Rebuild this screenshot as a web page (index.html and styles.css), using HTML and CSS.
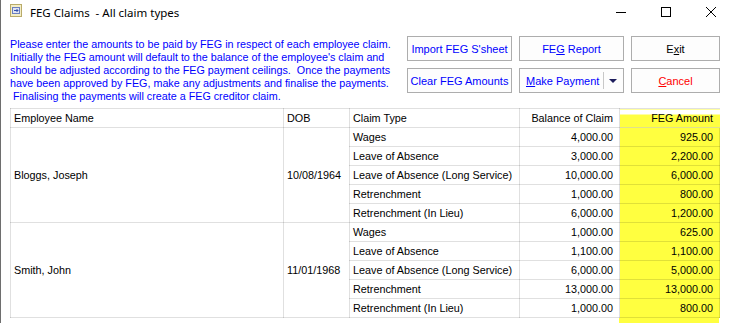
FILE: index.html
```html
<!DOCTYPE html>
<html>
<head>
<meta charset="utf-8">
<link rel="stylesheet" href="styles.css">
</head>
<body>
<div class="window">
  <div class="titlebar">
    <svg class="app-icon" width="12" height="13" viewBox="0 0 12 13">
      <rect x="0.5" y="0.5" width="11" height="12" fill="#f4eec6" stroke="#b9ab6a"/>
      <rect x="2.5" y="3.5" width="7" height="6" fill="#dfe3f2" stroke="#6b7fbf"/>
      <path d="M4 6.5h4M6.5 5l1.5 1.5L6.5 8" fill="none" stroke="#3050b0" stroke-width="1"/>
    </svg>
    <span class="title">FEG Claims  - All claim types</span>
    <div class="caption">
      <span class="cap"><svg width="10" height="10" viewBox="0 0 10 10"><path d="M0 5.5h10" stroke="#000" stroke-width="1"/></svg></span>
      <span class="cap"><svg width="10" height="10" viewBox="0 0 10 10"><rect x="0.5" y="0.5" width="9" height="9" fill="none" stroke="#000"/></svg></span>
      <span class="cap"><svg width="10" height="10" viewBox="0 0 10 10"><path d="M0 0L10 10M10 0L0 10" stroke="#000" stroke-width="1"/></svg></span>
    </div>
  </div>

  <div class="top">
    <p class="intro">Please enter the amounts to be paid by FEG in respect of each employee claim.<br>Initially the FEG amount will default to the balance of the employee's claim and<br>should be adjusted according to the FEG payment ceilings.&nbsp; Once the payments<br>have been approved by FEG, make any adjustments and finalise the payments.<br>&nbsp;Finalising the payments will create a FEG creditor claim.</p>
    <div class="actions">
      <button class="btn"><span>Import FEG S'sheet</span></button>
      <button class="btn"><span>FE<u>G</u> Report</span></button>
      <button class="btn btn-exit"><span>E<u>x</u>it</span></button>
      <button class="btn"><span>Clear FEG Amounts</span></button>
      <button class="btn btn-split"><span class="split-label"><u>M</u>ake Payment</span><span class="split-sep"></span><span class="split-arrow"></span></button>
      <button class="btn btn-cancel"><span><u>C</u>ancel</span></button>
    </div>
  </div>

  <table class="grid">
    <colgroup>
      <col class="c-name"><col class="c-dob"><col class="c-type"><col class="c-bal"><col class="c-feg">
    </colgroup>
    <thead>
      <tr>
        <th>Employee Name</th>
        <th>DOB</th>
        <th>Claim Type</th>
        <th class="num">Balance of Claim</th>
        <th class="num feg feg-head">FEG Amount</th>
      </tr>
    </thead>
    <tbody>
      <tr>
        <td rowspan="5">Bloggs, Joseph</td>
        <td rowspan="5">10/08/1964</td>
        <td>Wages</td><td class="num">4,000.00</td><td class="num feg">925.00</td>
      </tr>
      <tr><td>Leave of Absence</td><td class="num">3,000.00</td><td class="num feg">2,200.00</td></tr>
      <tr><td>Leave of Absence (Long Service)</td><td class="num">10,000.00</td><td class="num feg">6,000.00</td></tr>
      <tr><td>Retrenchment</td><td class="num">1,000.00</td><td class="num feg">800.00</td></tr>
      <tr><td>Retrenchment (In Lieu)</td><td class="num">6,000.00</td><td class="num feg">1,200.00</td></tr>
      <tr>
        <td rowspan="5">Smith, John</td>
        <td rowspan="5">11/01/1968</td>
        <td>Wages</td><td class="num">1,000.00</td><td class="num feg">625.00</td>
      </tr>
      <tr><td>Leave of Absence</td><td class="num">1,100.00</td><td class="num feg">1,100.00</td></tr>
      <tr><td>Leave of Absence (Long Service)</td><td class="num">6,000.00</td><td class="num feg">5,000.00</td></tr>
      <tr><td>Retrenchment</td><td class="num">13,000.00</td><td class="num feg">13,000.00</td></tr>
      <tr><td>Retrenchment (In Lieu)</td><td class="num">1,000.00</td><td class="num feg">800.00</td></tr>
    </tbody>
  </table>
  <div class="feg-tail"></div>
</div>
</body>
</html>
```

FILE: styles.css
```css
html, body {
  margin: 0;
  padding: 0;
  background: #ffffff;
  overflow: hidden;
}

.window {
  width: 732px;
  height: 323px;
  border-left: 1px solid #6e6e6e;
  background: #ffffff;
  font-family: "Liberation Sans", Arial, sans-serif;
  font-size: 11px;
  color: #000;
  overflow: hidden;
}

.titlebar {
  height: 30px;
  display: flex;
  align-items: flex-start;
}

.app-icon {
  margin: 4px 0 0 9px;
  flex: none;
}

.title {
  margin: 5px 0 0 8px;
  font-family: "Noto Sans", "Open Sans", sans-serif;
  font-size: 11.5px;
  line-height: 16px;
  white-space: pre;
}

.caption {
  margin-left: auto;
  display: flex;
}

.cap {
  width: 45px;
  height: 24px;
  display: flex;
  align-items: center;
  justify-content: center;
}

.top {
  display: flex;
  align-items: flex-start;
  margin-top: 6px;
  padding-left: 9px;
}

.intro {
  margin: 2px 0 0 0;
  width: 397px;
  flex: none;
  color: #0000ff;
  font-size: 10.75px;
  line-height: 13px;
  white-space: nowrap;
}

.actions {
  display: grid;
  grid-template-columns: 105px 105px 89px;
  grid-auto-rows: 25px;
  gap: 7px;
}

.btn {
  font: inherit;
  font-size: 11px;
  color: #0000ff;
  background: #fdfdfd;
  border: 1px solid #adadad;
  padding: 0;
  margin: 0;
  display: flex;
  align-items: center;
  justify-content: center;
  white-space: pre;
}

.btn-exit { color: #000; }
.btn-cancel { color: #ff0000; }

.btn-split {
  justify-content: flex-start;
  padding-left: 6px;
}

.split-label {
  flex: 0 0 77px;
  text-align: left;
}

.split-sep {
  width: 1px;
  height: 17px;
  background: #c8c8c8;
}

.split-arrow {
  width: 0;
  height: 0;
  border-left: 4px solid transparent;
  border-right: 4px solid transparent;
  border-top: 4px solid #1d1d5c;
  margin-left: 5px;
}

.grid {
  margin: 5px 0 0 9px;
  border-collapse: collapse;
  table-layout: fixed;
  width: 710px;
}

.c-name { width: 273px; }
.c-dob { width: 66px; }
.c-type { width: 170px; }
.c-bal { width: 100px; }
.c-feg { width: 100px; }

.grid th, .grid td {
  border: 1px solid rgba(0, 0, 0, 0.12);
  height: 18px;
  padding: 0 3px;
  font-weight: normal;
  font-size: 10.8px;
  text-align: left;
  white-space: nowrap;
  line-height: 13px;
}

.grid .num {
  text-align: right;
  padding-right: 6px;
}

.grid .feg {
  background: #ffff40;
}

.grid .feg-head {
  background: linear-gradient(to bottom, #ffffff 0, #ffffff 5px, #ffff40 5px);
  border-right-color: transparent;
}

.feg-tail {
  margin-left: 618px;
  width: 100px;
  height: 10px;
  background: #ffff40;
}
```
